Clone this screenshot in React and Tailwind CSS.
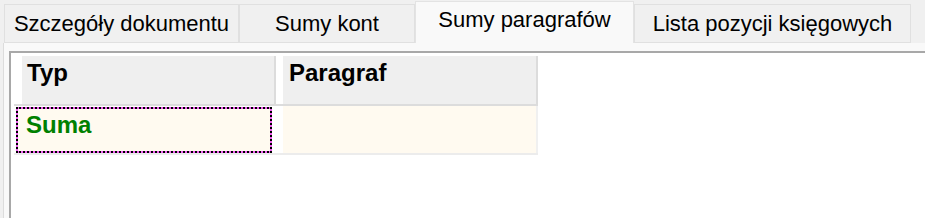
import React from 'react';

const tabs = [
    { label: 'Szczegóły dokumentu', w: 'w-[235px]' },
    { label: 'Sumy kont', w: 'w-[176px]' },
    { label: 'Sumy paragrafów', w: 'w-[219px]', active: true },
    { label: 'Lista pozycji księgowych', w: 'w-[277px]' },
];

const Tab = ({ label, w, active }) =>
    active ? (
        <div className={`${w} h-[42px] shrink-0 bg-[#f9f9f9] border-x border-t border-[#e3e3e3] pt-[5px] text-center text-[22px] leading-[25px] text-black`}>
            {label}
        </div>
    ) : (
        <div className={`${w} h-[39px] shrink-0 bg-[#f0f0f0] border border-[#e0e0e0] pt-[6px] text-center text-[22px] leading-[25px] text-black`}>
            {label}
        </div>
    );

const App = () => {
    return (
        <div className="w-[925px] h-[218px] overflow-hidden bg-[#f0f0f0] flex flex-col font-['Liberation_Sans',Arial,sans-serif]">
            {/* Tab strip */}
            <div className="h-[43px] shrink-0 flex items-end pl-[4px]">
                {tabs.map((t) => (
                    <Tab key={t.label} {...t} />
                ))}
            </div>

            {/* Tab page */}
            <div className="flex-1 flex ml-[3px] border-l border-[#dcdcdc] bg-[#f9f9f9] pl-[5px] pt-[8px]">
                <div className="flex-1 bg-white border-l-2 border-t-2 border-[#a8a8a8] pl-[3px] pt-[3px]">
                    {/* Header */}
                    <div className="flex h-[48px]">
                        <div className="w-[8px] bg-white" />
                        <div className="w-[254px] bg-[#efefef] border-r-2 border-[#dcdcdc] pl-[5px] pt-[3px] text-[24px] leading-[28px] font-bold text-black">
                            Typ
                        </div>
                        <div className="w-[7px] bg-white" />
                        <div className="w-[255px] bg-[#efefef] border-r-2 border-[#dcdcdc] pl-[6px] pt-[3px] text-[24px] leading-[28px] font-bold text-black">
                            Paragraf
                        </div>
                    </div>
                    <div className="w-[524px] h-[2px] bg-[#dcdcdc]" />

                    {/* Row */}
                    <div className="flex h-[47px]">
                        <div className="w-[260px] bg-white px-[2px] pt-[1px]">
                            <div className="h-full bg-[#fffaf0] border-2 border-[#f15ef1] outline-2 outline-dotted outline-black -outline-offset-2 pl-[8px] pt-[2px] text-[24px] leading-[28px] font-bold text-[#008000]">
                                Suma
                            </div>
                        </div>
                        <div className="w-[9px] bg-white" />
                        <div className="w-[255px] bg-[#fffaf0] border-r-2 border-[#f0f0f0]" />
                    </div>
                    <div className="w-[524px] h-[2px] bg-[#ececec]" />
                </div>
            </div>
        </div>
    );
};

export default App;
